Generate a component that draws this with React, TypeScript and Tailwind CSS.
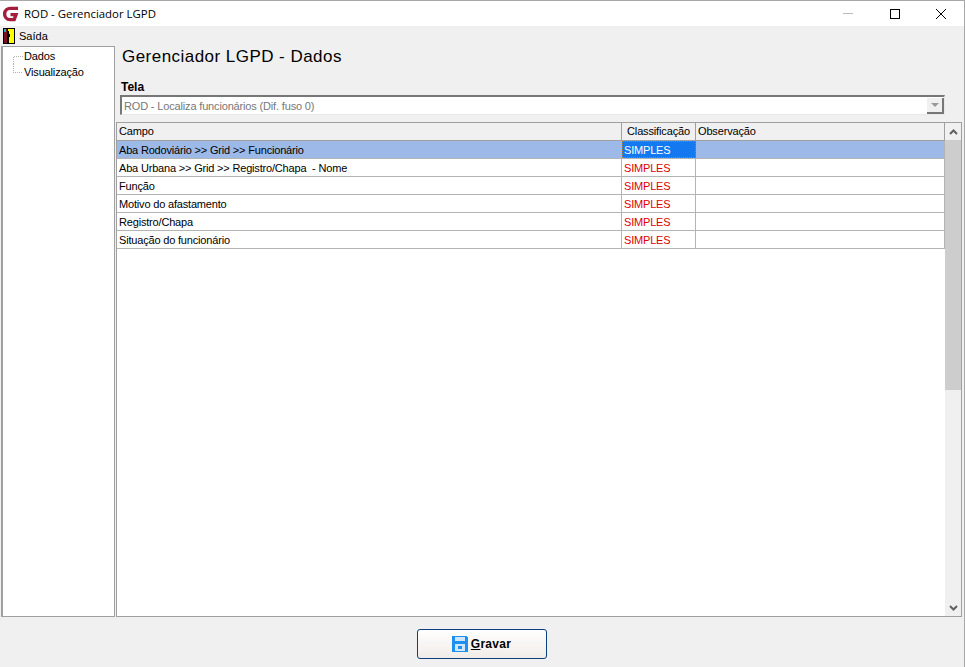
const rows = [
  'Aba Rodoviário >> Grid >> Funcionário',
  'Aba Urbana >> Grid >> Registro/Chapa  - Nome',
  'Função',
  'Motivo do afastamento',
  'Registro/Chapa',
  'Situação do funcionário',
];

function Logo() {
  return (
    <svg width="16" height="16" viewBox="0 0 16 16">
      <path d="M15 2.4 H7.5 A5.6 5.6 0 0 0 7 13.6 H11.2 L13 8.6 H7.5" fill="none" stroke="#a51d3c" strokeWidth="3.4" />
    </svg>
  );
}

function DoorIcon() {
  return (
    <svg width="12" height="16" viewBox="0 0 12 16" shapeRendering="crispEdges">
      <rect x="0" y="0" width="12" height="16" fill="#000" />
      <rect x="1" y="1" width="3" height="14" fill="#7a1020" />
      <rect x="1" y="1" width="2" height="3" fill="#20b0c0" />
      <rect x="5" y="1" width="6" height="14" fill="#ffff00" />
      <rect x="4" y="3" width="2" height="12" fill="#000" />
      <rect x="6" y="6" width="1" height="3" fill="#000" />
    </svg>
  );
}

function FloppyIcon() {
  return (
    <svg width="16" height="16" viewBox="0 0 16 16" shapeRendering="crispEdges">
      <path d="M0 0 H14 L16 2 V16 H0 Z" fill="#1e90f0" />
      <rect x="3" y="1" width="10" height="4" fill="#cfe6fa" />
      <rect x="3" y="8" width="10" height="7" fill="#cfe6fa" />
      <rect x="6" y="10" width="4" height="3" fill="#1e90f0" />
    </svg>
  );
}

function TreeItem({ label, last }: { label: string; last?: boolean }) {
  return (
    <div className="flex h-[16px] items-center">
      <svg width="21" height="16" viewBox="0 0 21 16" className="shrink-0" shapeRendering="crispEdges">
        <path
          d={last ? 'M10.5 0 V8.5 H20' : 'M10.5 8.5 V16 M10.5 8.5 H20'}
          stroke="#b0b0b0"
          strokeDasharray="1 1"
          fill="none"
        />
      </svg>
      <span className="text-[11px] tracking-[-0.15px] text-black">{label}</span>
    </div>
  );
}

export default function App() {
  return (
    <div className="flex h-[667px] w-[965px] flex-col overflow-hidden border-r border-t border-r-[#a8a8a8] border-t-[#a8a8a8] bg-[#f0f0f0] font-['Liberation_Sans',sans-serif]">
      {/* title bar */}
      <div className="flex h-[25px] shrink-0 items-center bg-white pl-[3px]">
        <Logo />
        <span className="ml-[5px] font-['Open_Sans',sans-serif] text-[11.4px] text-black">ROD - Gerenciador LGPD</span>
        <div className="ml-auto flex items-center">
          <svg width="46" height="16" viewBox="0 0 46 16" stroke="#bdbdbd">
            <path d="M17 7.5 H27" />
          </svg>
          <svg width="46" height="16" viewBox="0 0 46 16" stroke="#000" fill="none">
            <rect x="18.5" y="3.5" width="9" height="9" />
          </svg>
          <svg width="46" height="16" viewBox="0 0 46 16" stroke="#000">
            <path d="M18 3 L28 13 M28 3 L18 13" />
          </svg>
        </div>
      </div>

      {/* menu */}
      <div className="flex h-[20px] shrink-0 items-center pl-[3px]">
        <DoorIcon />
        <span className="ml-[4px] text-[11px] text-black">Saída</span>
      </div>

      {/* body */}
      <div className="flex h-[571px] shrink-0 pl-[1px]">
        <div className="h-full w-[114px] shrink-0 border border-l-2 border-[#a0a0a0] bg-white pt-[1px]">
          <TreeItem label="Dados" />
          <TreeItem label="Visualização" last />
        </div>

        <div className="ml-[1px] flex min-w-0 flex-1 flex-col pr-[2px]">
          <h1 className="pl-[6px] pt-[1px] text-[17px] leading-[20px] tracking-[0.46px] text-black">Gerenciador LGPD - Dados</h1>
          <div className="mt-[13px] pl-[5px] text-[12px] font-bold leading-[15px] text-black">Tela</div>

          {/* combo */}
          <div className="ml-[4px] flex h-[20px] w-[825px] shrink-0 items-center border-l-2 border-t-2 border-b border-r border-l-[#777] border-t-[#777] border-b-[#e8e8e8] border-r-[#e8e8e8] bg-white">
            <span className="pl-[2px] pt-[1px] text-[11px] tracking-[-0.16px] text-[#777]">ROD - Localiza funcionários (Dif. fuso 0)</span>
            <div className="ml-auto flex h-[16px] w-[17px] items-center justify-center border-b-2 border-r-2 border-[#777] bg-[#f0f0f0]">
              <div className="h-0 w-0 border-x-[4px] border-t-[4px] border-x-transparent border-t-[#999]" />
            </div>
          </div>

          {/* grid */}
          <div className="mt-[7px] flex min-h-0 flex-1 border border-[#a0a0a0] bg-white">
            <div className="min-w-0 flex-1">
              <div className="flex h-[18px] border-b border-[#a0a0a0] bg-[#f0f0f0] text-[11px] tracking-[-0.15px] text-black">
                <div className="flex w-[505px] items-center border-r border-[#a0a0a0] pl-[2px]">Campo</div>
                <div className="flex w-[74px] items-center justify-center border-r border-[#a0a0a0]">Classificação</div>
                <div className="flex flex-1 items-center border-r border-[#a0a0a0] pl-[2px]">Observação</div>
              </div>
              {rows.map((r, i) => (
                <div key={r} className={`flex h-[18px] border-b border-[#b4b4b4] text-[11px] tracking-[-0.18px] ${i === 0 ? 'bg-[#9db9e8]' : ''}`}>
                  <div className="flex w-[505px] items-center whitespace-pre border-r border-[#b4b4b4] pl-[2px] pt-[1px] text-black">{r}</div>
                  <div className={`flex w-[74px] items-center border-r border-[#b4b4b4] pt-[1px] ${i === 0 ? 'border border-dotted border-[#c08020] bg-[#1479f0] pl-[1px] text-white' : 'pl-[2px] text-[#e00000]'}`}>SIMPLES</div>
                  <div className="flex-1 border-r border-[#b4b4b4]" />
                </div>
              ))}
            </div>

            {/* scrollbar */}
            <div className="flex w-[16px] shrink-0 flex-col bg-[#f0f0f0]">
              <div className="flex h-[17px] shrink-0 items-center justify-center">
                <svg width="9" height="6" viewBox="0 0 9 6" fill="none" stroke="#606060" strokeWidth="2">
                  <path d="M1 5 L4.5 1.5 L8 5" />
                </svg>
              </div>
              <div className="h-[250px] shrink-0 bg-[#cdcdcd]" />
              <div className="mt-auto flex h-[17px] shrink-0 items-center justify-center">
                <svg width="9" height="6" viewBox="0 0 9 6" fill="none" stroke="#606060" strokeWidth="2">
                  <path d="M1 1 L4.5 4.5 L8 1" />
                </svg>
              </div>
            </div>
          </div>
        </div>
      </div>

      {/* footer */}
      <div className="flex flex-1 items-start justify-center pr-[1px] pt-[12px]">
        <button className="flex h-[30px] w-[130px] items-center justify-center rounded-[3px] border border-[#0c3f7c] bg-gradient-to-b from-white to-[#f0ece8] text-[12px] font-bold tracking-[0.3px] text-black">
          <FloppyIcon />
          <span className="ml-[3px]">
            <span className="underline">G</span>ravar
          </span>
        </button>
      </div>
    </div>
  );
}
